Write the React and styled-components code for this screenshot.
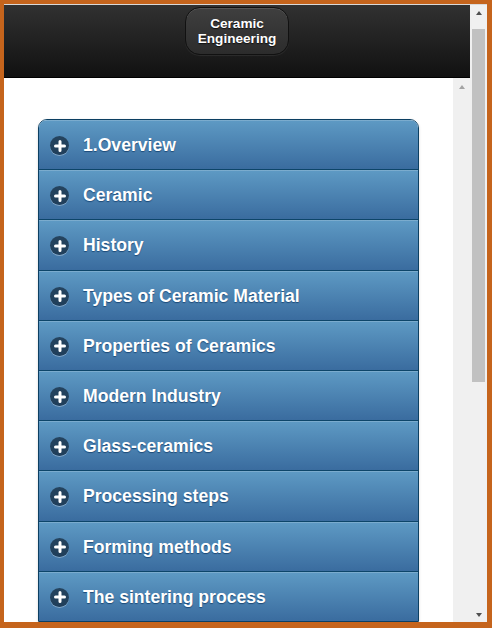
import React from 'react'
import styled, { createGlobalStyle } from 'styled-components'

const GlobalStyle = createGlobalStyle`
  html, body {
    margin: 0;
    padding: 0;
    overflow: hidden;
    background: #fff;
  }
  * { box-sizing: border-box; }
`;

const Frame = styled.div`
  width: 492px;
  height: 628px;
  display: flex;
  background: #c5641c;
  border-style: solid;
  border-color: #c5641c;
  border-width: 4px 5px 6px 4px;
  box-shadow: inset 0 0 0 1px #7b3b0c;
`;

const Window = styled.div`
  flex: 1;
  display: flex;
  border-top: 1px solid #d9d9d9;
  overflow: hidden;
`;

const Page = styled.div`
  flex: 1;
  display: flex;
  flex-direction: column;
  min-width: 0;
`;

const Header = styled.div`
  height: 73px;
  flex: none;
  display: flex;
  justify-content: center;
  align-items: flex-start;
  padding-top: 2px;
  background: linear-gradient(#313131, #111111);
  border-bottom: 1px solid #000;
`;

const TitleButton = styled.div`
  width: 104px;
  height: 48px;
  border-radius: 15px;
  border: 1px solid #111;
  background: linear-gradient(#3f3f3f, #2c2c2c);
  box-shadow: inset 0 1px 0 rgba(255,255,255,0.12), 0 1px 1px rgba(255,255,255,0.08);
  display: flex;
  align-items: center;
  justify-content: center;
  text-align: center;
  color: #fff;
  font-family: "Liberation Sans", Arial, sans-serif;
  font-weight: bold;
  font-size: 13.6px;
  line-height: 15px;
  text-shadow: 0 1px 1px #111;
`;

const Body = styled.div`
  flex: 1;
  display: flex;
  min-height: 0;
`;

const Content = styled.div`
  flex: 1;
  background: #fff;
  padding: 41px 34px 0 34px;
  overflow: hidden;
`;

const Accordion = styled.div`
  border: 1px solid #0c3f62;
  border-radius: 9px 9px 0 0;
  overflow: hidden;
  box-shadow: 0 1px 3px rgba(0,0,0,0.15);
`;

const Row = styled.div`
  height: ${p => (p.first ? 49.2 : 50.2)}px;
  display: flex;
  align-items: center;
  padding: 2px 0 0 11px;
  border-top: ${p => (p.first ? 'none' : '1px solid #0d4569')};
  background: linear-gradient(#5e9ac4, #3a6c9f);
  box-shadow: inset 0 1px 0 rgba(255,255,255,0.18);
  color: #fff;
  font-family: "Liberation Sans", Arial, sans-serif;
  font-weight: bold;
  font-size: 17.6px;
  text-shadow: 0 1px 1px #1c4a78;
  white-space: nowrap;
`;

const PlusIcon = styled.span`
  width: 19px;
  height: 19px;
  flex: none;
  border-radius: 50%;
  background: rgba(20, 40, 60, 0.72);
  box-shadow: 0 1px 0 rgba(255,255,255,0.35);
  display: flex;
  align-items: center;
  justify-content: center;
  margin-right: 14px;
`;

const Scrollbar = styled.div`
  width: 17px;
  flex: none;
  background: #f0f0f0;
  display: flex;
  flex-direction: column;
  align-items: center;
`;

const Arrow = styled.div`
  width: 0;
  height: 0;
  border-left: 3.5px solid transparent;
  border-right: 3.5px solid transparent;
  ${p => p.down
    ? `border-top: 4px solid ${p.color};`
    : `border-bottom: 4px solid ${p.color};`}
  margin-top: ${p => p.top}px;
`;

const Thumb = styled.div`
  width: 13px;
  height: 353px;
  background: #c1c1c1;
  margin-top: 14px;
`;

const Spacer = styled.div`
  flex: 1;
`;

const items = [
  '1.Overview',
  'Ceramic',
  'History',
  'Types of Ceramic Material',
  'Properties of Ceramics',
  'Modern Industry',
  'Glass-ceramics',
  'Processing steps',
  'Forming methods',
  'The sintering process',
]

const Plus = () => (
  <PlusIcon>
    <svg width="12" height="12" viewBox="0 0 12 12">
      <path d="M6 1.5v9M1.5 6h9" stroke="#fff" strokeWidth="3" strokeLinecap="round" />
    </svg>
  </PlusIcon>
)

const App = () => {
  return (
    <>
      <GlobalStyle />
      <Frame>
        <Window>
          <Page>
            <Header>
              <TitleButton>Ceramic<br />Engineering</TitleButton>
            </Header>
            <Body>
              <Content>
                <Accordion>
                  {items.map((label, i) => (
                    <Row key={label} first={i === 0}>
                      <Plus />
                      {label}
                    </Row>
                  ))}
                </Accordion>
              </Content>
              <Scrollbar>
                <Arrow color="#a3a3a3" top={7} />
              </Scrollbar>
            </Body>
          </Page>
          <Scrollbar>
            <Arrow color="#505050" top={6} />
            <Thumb />
            <Spacer />
            <Arrow color="#505050" down top={0} />
            <div style={{ height: 5 }} />
          </Scrollbar>
        </Window>
      </Frame>
    </>
  )
}

export default App
